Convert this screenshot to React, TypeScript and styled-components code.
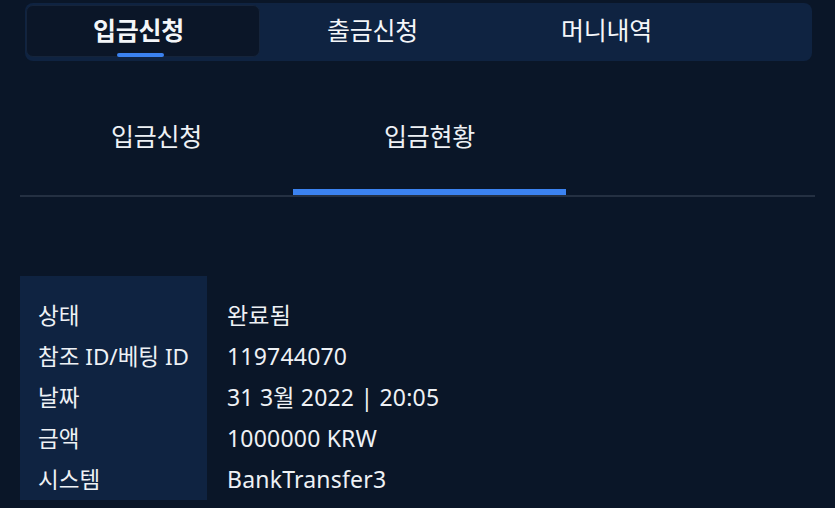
import React, { useState } from 'react';
import styled, { createGlobalStyle } from 'styled-components';

const GlobalStyle = createGlobalStyle`
  * { box-sizing: border-box; }
  html, body {
    margin: 0;
    background: #0a1628;
    font-family: "Noto Sans", "Noto Sans CJK KR", sans-serif;
    color: #eef1f5;
  }
`;

const mainTabs = ['입금신청', '출금신청', '머니내역'];
const subTabs = ['입금신청', '입금현황'];
const details = [
  { label: '상태', value: '완료됨' },
  { label: '참조 ID/베팅 ID', value: '119744070' },
  { label: '날짜', value: '31 3월 2022 | 20:05' },
  { label: '금액', value: '1000000 KRW' },
  { label: '시스템', value: 'BankTransfer3' },
];

const App: React.FC = () => {
  const [main, setMain] = useState(0);
  const [sub, setSub] = useState(1);

  return (
    <Page>
      <GlobalStyle />
      <MainTabBar>
        {mainTabs.map((tab, i) => (
          <MainTab key={tab} active={i === main} onClick={() => setMain(i)}>
            {tab}
          </MainTab>
        ))}
      </MainTabBar>
      <SubTabBar>
        {subTabs.map((tab, i) => (
          <SubTab key={tab} active={i === sub} onClick={() => setSub(i)}>
            {tab}
          </SubTab>
        ))}
      </SubTabBar>
      <DetailPanel>
        <LabelColumn>
          {details.map((d) => (
            <Cell key={d.label}>{d.label}</Cell>
          ))}
        </LabelColumn>
        <ValueColumn>
          {details.map((d) => (
            <Cell key={d.label} wide>
              {d.value}
            </Cell>
          ))}
        </ValueColumn>
      </DetailPanel>
    </Page>
  );
};

export default App;

const Page = styled.div`
  width: 835px;
  height: 508px;
  overflow: hidden;
  padding: 3px 20px 0 20px;
`;

const MainTabBar = styled.div`
  display: flex;
  width: 787px;
  height: 58px;
  margin-left: 5px;
  padding: 2px 1px;
  border-radius: 8px;
  background: #0f2341;
`;

const MainTab = styled.button<{ active: boolean }>`
  position: relative;
  width: 234px;
  height: 52px;
  padding: 0 9px 4px 0;
  border: 1px solid ${({ active }) => (active ? '#15243b' : 'transparent')};
  border-radius: 7px;
  background: ${({ active }) => (active ? '#0b1628' : 'transparent')};
  color: #f4f6f9;
  font-family: "Noto Sans CJK KR", sans-serif;
  font-size: 25px;
  font-weight: ${({ active }) => (active ? 700 : 400)};
  letter-spacing: -0.3px;
  cursor: pointer;
  &::after {
    content: '';
    display: ${({ active }) => (active ? 'block' : 'none')};
    position: absolute;
    left: 90px;
    bottom: -1px;
    width: 47px;
    height: 4px;
    border-radius: 2px;
    background: #3b82f0;
  }
`;

const SubTabBar = styled.div`
  display: flex;
  margin-top: 19px;
  border-bottom: 2px solid #243042;
`;

const SubTab = styled.button<{ active: boolean }>`
  width: 273px;
  height: 115px;
  padding: 0;
  border: none;
  border-bottom: 6px solid ${({ active }) => (active ? '#3b82f0' : 'transparent')};
  background: transparent;
  color: #eef1f5;
  font-family: "Noto Sans CJK KR", sans-serif;
  font-size: 25px;
  letter-spacing: -0.3px;
  cursor: pointer;
`;

const DetailPanel = styled.div`
  display: flex;
  margin-top: 79px;
`;

const LabelColumn = styled.div`
  width: 187px;
  height: 224px;
  padding: 19px 0 0 18px;
  background: #0f2341;
`;

const ValueColumn = styled.div`
  padding: 19px 0 0 20px;
`;

const Cell = styled.div<{ wide?: boolean }>`
  height: 41px;
  line-height: 41px;
  font-size: ${({ wide }) => (wide ? '23px' : '22.5px')};
  letter-spacing: ${({ wide }) => (wide ? '0.2px' : '0')};
  white-space: nowrap;
  color: #eef1f5;
`;
